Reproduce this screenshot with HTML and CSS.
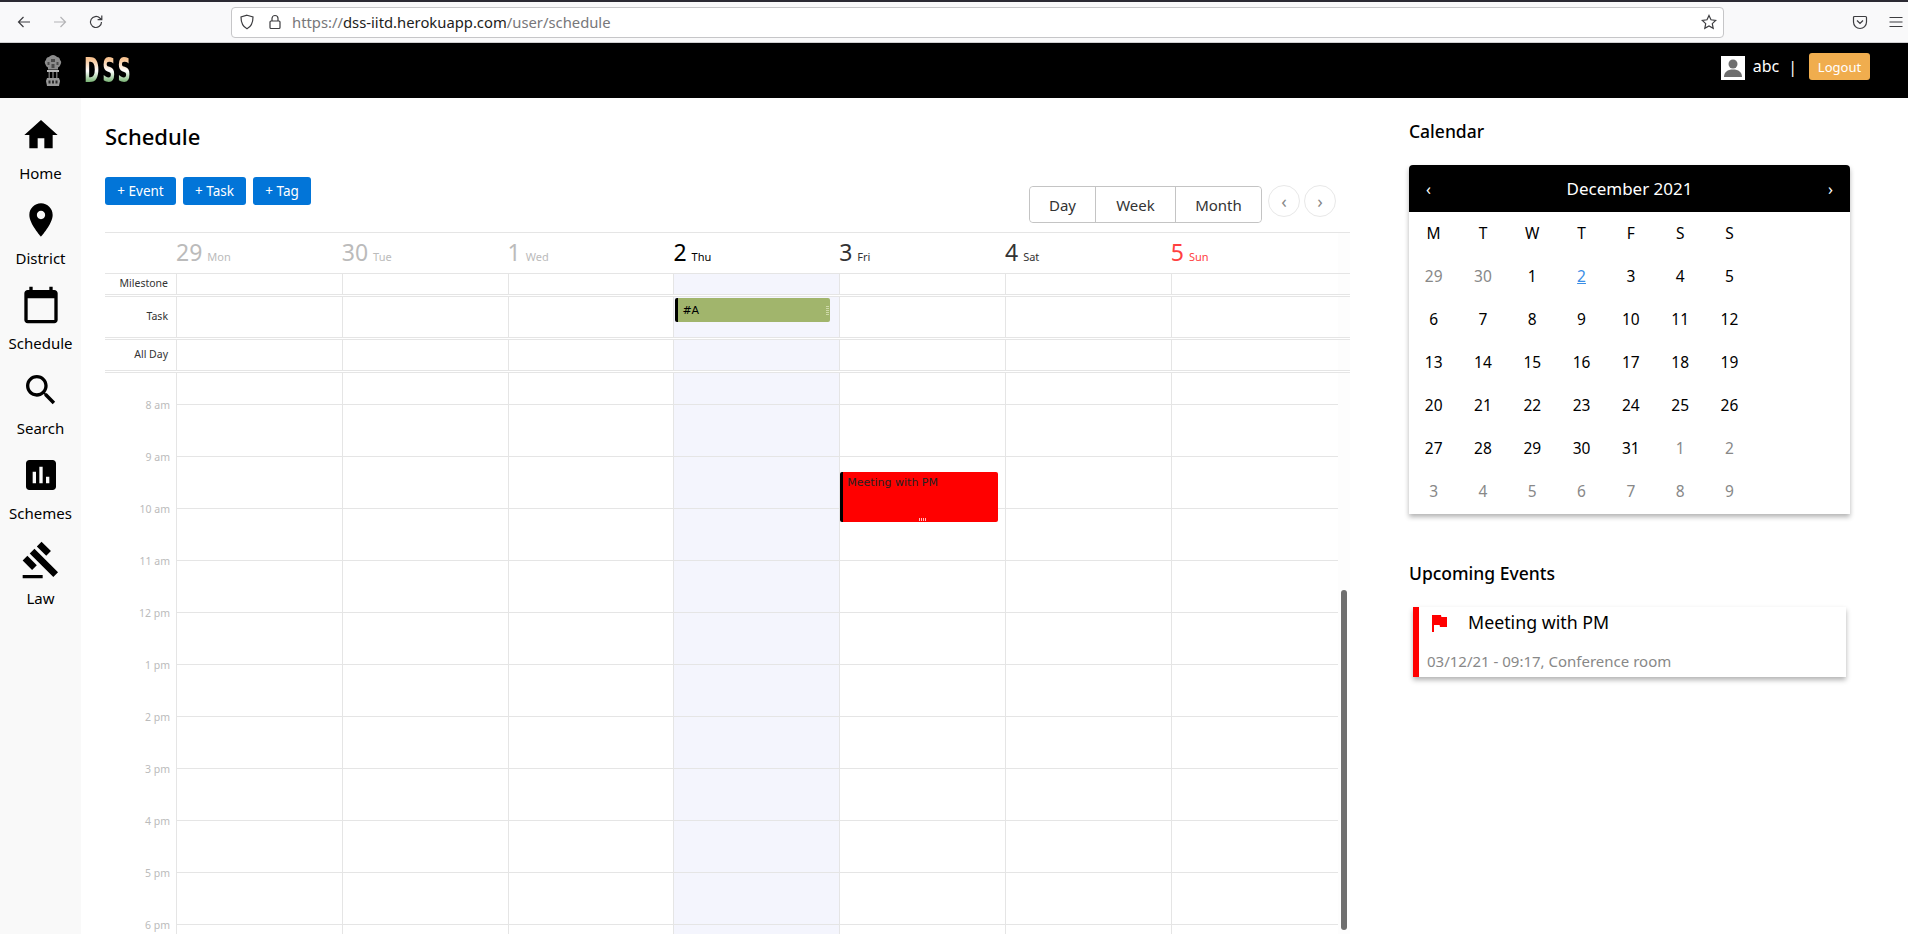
FILE: index.html
```html
<!DOCTYPE html>
<html lang="en">
<head>
    <meta charset="UTF-8">
    <meta name="viewport" content="width=device-width, initial-scale=1.0">
    <title>Schedule</title>
    <link rel="stylesheet" href="styles.css">
</head>
<body>
    <!-- browser toolbar -->
    <div class="browser">
        <svg class="tool" viewBox="0 0 16 16"><path d="M14 8H2.5M7.5 3 2.5 8l5 5"/></svg>
        <svg class="tool faded" viewBox="0 0 16 16"><path d="M2 8h11.5M8.5 3l5 5-5 5"/></svg>
        <svg class="tool" viewBox="0 0 16 16"><path d="M13.5 8A5.5 5.5 0 1 1 11.8 4L13.5 5.5M13.8 1.5v4.2H9.6"/></svg>
        <div class="urlbar">
            <svg class="tool" viewBox="0 0 16 16"><path d="M8 1.2 14 3c0 6-1.5 9.500-6 11.800C3.500 12.500 2 9 2 3z"/></svg>
            <svg class="tool" viewBox="0 0 16 16"><rect x="3" y="7" width="10" height="7.500" rx="1"/><path d="M5 7V4.500a3 3 0 0 1 6 0V7"/></svg>
            <span class="url">https://<b>dss-iitd.herokuapp.com</b>/user/schedule</span>
            <svg class="tool star" viewBox="0 0 16 16"><path d="m8 1.500 2 4.300 4.700.6-3.400 3.200.9 4.700L8 12l-4.200 2.300.9-4.700L1.300 6.400 6 5.800z"/></svg>
        </div>
        <svg class="tool pocket" viewBox="0 0 16 16"><path d="M2.500 2.500h11a1 1 0 0 1 1 1V8a6.500 6.500 0 0 1-13 0V3.500a1 1 0 0 1 1-1zM5 6.500l3 3 3-3"/></svg>
        <svg class="tool menu" viewBox="0 0 16 16"><path d="M1.500 3.500h13M1.500 8h13M1.500 12.500h13"/></svg>
    </div>

    <header class="topbar">
        <svg class="emblem" viewBox="0 0 20 31">
            <path fill="#8c8c8c" d="M10 0c2 0 3 1 4 2 2 0 3 1.500 3 3 1.500 1 1.500 3 .5 4.500-.5 1.500-1.500 2.500-2.500 3v2H5v-2c-1-.5-2-1.500-2.500-3C1.500 8 1.500 6 3 5c0-1.500 1-3 3-3 1-1 2-2 4-2z"/>
            <path fill="#4a4a4a" d="M8 4h4v3H8zM4.500 7h2v3h-2zM13.500 7h2v3h-2zM8.500 9h3v4h-3z"/>
            <rect x="4" y="15" width="12" height="2" fill="#b8b8b8"/>
            <path fill="#6a6a6a" d="M5.500 17H7v6H5.500zM9.200 17h1.600v6H9.200zM13 17h1.500v6H13z"/>
            <path fill="#999" d="M4 23h12l1 3-1 5H4l-1-5z"/>
            <path fill="#2c2c2c" d="M5.500 25.500h2v3h-2zM9 25.500h2v3H9zM12.500 25.500h2v3h-2z"/>
        </svg>
        <span class="brand">DSS</span>
        <div class="userbox">
            <svg class="avatar" viewBox="0 0 24 24"><rect width="24" height="24" fill="#fff"/><circle cx="12" cy="8" r="4.500" fill="#6e6e6e"/><path fill="#6e6e6e" d="M3 21c0-5 3.500-7.500 9-7.500s9 2.500 9 7.500z"/></svg>
            <span class="username">abc</span>
            <span class="sep">|</span>
            <button class="logout">Logout</button>
        </div>
    </header>

    <div class="main">
        <nav class="sidebar">
            <a class="nav-item"><svg viewBox="0 0 24 24"><path d="M10 20v-6h4v6h5v-8h3L12 3 2 12h3v8z"/></svg><span>Home</span></a>
            <a class="nav-item"><svg viewBox="0 0 24 24"><path d="M12 2C8.130 2 5 5.130 5 9c0 5.250 7 13 7 13s7-7.750 7-13c0-3.870-3.130-7-7-7zm0 9.500c-1.380 0-2.500-1.120-2.500-2.500s1.120-2.500 2.500-2.500 2.500 1.120 2.500 2.500-1.120 2.500-2.500 2.500z"/></svg><span>District</span></a>
            <a class="nav-item"><svg viewBox="0 0 24 24"><path d="M20 3h-1V1h-2v2H7V1H5v2H4c-1.100 0-2 .9-2 2v16c0 1.100.9 2 2 2h16c1.100 0 2-.9 2-2V5c0-1.100-.9-2-2-2zm0 18H4V8h16v13z"/></svg><span>Schedule</span></a>
            <a class="nav-item"><svg viewBox="0 0 24 24"><path d="M15.500 14h-.79l-.28-.27C15.410 12.590 16 11.110 16 9.500 16 5.910 13.090 3 9.500 3S3 5.910 3 9.500 5.910 16 9.500 16c1.610 0 3.090-.59 4.230-1.570l.27.28v.79l5 4.990L20.490 19l-4.990-5zm-6 0C7.010 14 5 11.990 5 9.500S7.010 5 9.500 5 14 7.010 14 9.500 11.990 14 9.500 14z"/></svg><span>Search</span></a>
            <a class="nav-item"><svg viewBox="0 0 24 24"><path d="M19 3H5c-1.100 0-2 .9-2 2v14c0 1.100.9 2 2 2h14c1.100 0 2-.9 2-2V5c0-1.100-.9-2-2-2zM9 17H7v-7h2v7zm4 0h-2V7h2v10zm4 0h-2v-4h2v4z"/></svg><span>Schemes</span></a>
            <a class="nav-item"><svg viewBox="0 0 24 24"><path d="M1 21h12v2H1zM5.245 8.070l2.830-2.827 14.140 14.142-2.828 2.828zM12.317 1l5.657 5.656-2.830 2.830-5.654-5.660zM3.825 9.485l5.657 5.657-2.828 2.828-5.657-5.657z"/></svg><span>Law</span></a>
        </nav>

        <section class="schedule">
            <h1 class="title">Schedule</h1>
            <div class="toolbar">
                <button class="btn-add add-event">+ Event</button>
                <button class="btn-add add-task">+ Task</button>
                <button class="btn-add add-tag">+ Tag</button>
                <div class="views">
                    <button class="view view-day">Day</button>
                    <button class="view view-week">Week</button>
                    <button class="view view-month">Month</button>
                </div>
                <button class="circle">‹</button>
                <button class="circle">›</button>
            </div>

            <div class="cal-grid day-row">
                <div></div>
                <div class="day past"><b>29</b><span>Mon</span></div>
                <div class="day past"><b>30</b><span>Tue</span></div>
                <div class="day past"><b>1</b><span>Wed</span></div>
                <div class="day today"><b>2</b><span>Thu</span></div>
                <div class="day"><b>3</b><span>Fri</span></div>
                <div class="day"><b>4</b><span>Sat</span></div>
                <div class="day sunday"><b>5</b><span>Sun</span></div>
                <div class="gutter"></div>
            </div>

            <div class="cal-grid panel milestone">
                <div class="panel-label">Milestone</div>
                <div class="cell"></div><div class="cell"></div><div class="cell"></div><div class="cell hl"></div><div class="cell"></div><div class="cell"></div><div class="cell"></div>
                <div class="gutter"></div>
            </div>
            <div class="cal-grid panel task">
                <div class="panel-label">Task</div>
                <div class="cell"></div><div class="cell"></div><div class="cell"></div>
                <div class="cell hl"><div class="task-item">#A<i class="grip-y"></i></div></div>
                <div class="cell"></div><div class="cell"></div><div class="cell"></div>
                <div class="gutter"></div>
            </div>
            <div class="cal-grid panel allday">
                <div class="panel-label">All Day</div>
                <div class="cell"></div><div class="cell"></div><div class="cell"></div><div class="cell hl"></div><div class="cell"></div><div class="cell"></div><div class="cell"></div>
                <div class="gutter"></div>
            </div>

            <div class="cal-grid hours">
                <div class="times">
                    <span>8 am</span><span>9 am</span><span>10 am</span><span>11 am</span><span>12 pm</span><span>1 pm</span><span>2 pm</span><span>3 pm</span><span>4 pm</span><span>5 pm</span><span>6 pm</span>
                </div>
                <div class="col"></div>
                <div class="col"></div>
                <div class="col"></div>
                <div class="col hl"></div>
                <div class="col">
                    <div class="event">Meeting with PM<i class="grip-x"></i></div>
                </div>
                <div class="col"></div>
                <div class="col"></div>
                <div class="gutter"><div class="thumb"></div></div>
            </div>
        </section>

        <aside class="side">
            <h2 class="side-title">Calendar</h2>
            <div class="minical">
                <div class="minical-head"><span>‹</span><strong>December 2021</strong><span>›</span></div>
                <div class="minical-body">
                    <span>M</span><span>T</span><span>W</span><span>T</span><span>F</span><span>S</span><span>S</span>
                    <span class="off">29</span><span class="off">30</span><span>1</span><a class="now">2</a><span>3</span><span>4</span><span>5</span>
                    <span>6</span><span>7</span><span>8</span><span>9</span><span>10</span><span>11</span><span>12</span>
                    <span>13</span><span>14</span><span>15</span><span>16</span><span>17</span><span>18</span><span>19</span>
                    <span>20</span><span>21</span><span>22</span><span>23</span><span>24</span><span>25</span><span>26</span>
                    <span>27</span><span>28</span><span>29</span><span>30</span><span>31</span><span class="off">1</span><span class="off">2</span>
                    <span class="off">3</span><span class="off">4</span><span class="off">5</span><span class="off">6</span><span class="off">7</span><span class="off">8</span><span class="off">9</span>
                </div>
            </div>

            <h2 class="side-title upcoming">Upcoming Events</h2>
            <div class="upcoming-card">
                <div class="upcoming-top">
                    <svg viewBox="0 0 24 24"><path d="M14.400 6 14 4H5v17h2v-7h5.600l.4 2h7V6z"/></svg>
                    <span>Meeting with PM</span>
                </div>
                <div class="upcoming-meta">03/12/21 - 09:17, Conference room</div>
            </div>
        </aside>
    </div>
</body>
</html>
```

FILE: styles.css
```css
* {
    box-sizing: border-box;
}
html, body {
    height: 934px;
    overflow: hidden;
}
body {
    margin: 0;
    font-family: "Noto Sans", Arial, sans-serif;
    color: #000;
    background: #fff;
    display: flex;
    flex-direction: column;
}
button {
    font-family: inherit;
    cursor: pointer;
}

/* browser toolbar */
.browser {
    height: 43px;
    flex: none;
    display: flex;
    align-items: center;
    background: #f9f9fa;
    border-top: 2px solid #2b2a33;
    border-bottom: 1px solid #cfcfd1;
    padding-left: 16px;
}
.tool {
    width: 16px;
    height: 16px;
    flex: none;
    fill: none;
    stroke: #3d3d40;
    stroke-width: 1.200;
    margin-right: 20px;
}
.tool.faded {
    stroke: #b4b4b6;
}
.urlbar {
    width: 1493px;
    height: 31px;
    margin-left: 107px;
    background: #fff;
    border: 1px solid #c6c6c8;
    border-radius: 4px;
    display: flex;
    align-items: center;
    padding-left: 7px;
}
.urlbar .tool {
    margin-right: 12px;
}
.url {
    font-size: 14.800px;
    color: #77777a;
    white-space: nowrap;
    margin-left: -3px;
}
.url b {
    font-weight: 400;
    color: #1d1d20;
}
.urlbar .star {
    margin-left: auto;
    margin-right: 6px;
}
.pocket {
    margin-left: 128px;
    margin-right: 20px;
}
.menu {
    margin-right: 0;
}

/* black site header */
.topbar {
    height: 55px;
    flex: none;
    background: #000;
    display: flex;
    align-items: center;
    padding-left: 43px;
    padding-right: 38px;
}
.emblem {
    width: 20px;
    height: 31px;
}
.brand {
    margin-left: 21px;
    font-family: "DejaVu Sans", sans-serif;
    font-weight: 700;
    font-size: 33px;
    line-height: 28px;
    letter-spacing: 5px;
    background: linear-gradient(180deg, #f8c493 8%, #ffffff 50%, #6fae6a 92%);
    -webkit-background-clip: text;
    background-clip: text;
    color: transparent;
    transform: scaleX(0.56);
    transform-origin: left center;
}
.userbox {
    margin-left: auto;
    margin-bottom: 8px;
    display: flex;
    align-items: center;
    color: #fff;
}
.avatar {
    width: 24px;
    height: 24px;
    margin-top: 2px;
}
.username {
    margin-left: 8px;
    font-size: 16px;
    margin-top: -2px;
}
.sep {
    margin-left: 9px;
    font-size: 16px;
}
.logout {
    margin-left: 12px;
    width: 61px;
    height: 27px;
    padding: 0;
    background: #f0ad4e;
    border: 0;
    border-radius: 3px;
    color: #fff;
    font-size: 13px;
}

/* page */
.main {
    flex: 1;
    display: flex;
    min-height: 0;
}
.sidebar {
    width: 81px;
    flex: none;
    background: #f9f9f9;
    padding-top: 17px;
    display: flex;
    flex-direction: column;
    gap: 15px;
}
.nav-item {
    height: 70px;
    display: flex;
    flex-direction: column;
    align-items: center;
    font-size: 15px;
}
.nav-item svg {
    width: 40px;
    height: 40px;
    flex: none;
}
.nav-item span {
    margin-top: 6px;
    line-height: 24px;
}

.schedule {
    width: 1245px;
    margin-left: 24px;
    flex: none;
    overflow: hidden;
}
.title {
    margin: 23px 0 0;
    font-size: 22px;
    font-weight: 500;
    line-height: 30px;
}
.toolbar {
    margin-top: 26px;
    height: 55px;
    display: flex;
    align-items: flex-start;
}
.btn-add {
    height: 28px;
    padding: 0;
    margin-right: 7px;
    background: #0275d8;
    color: #fff;
    border: 0;
    border-radius: 3px;
    font-size: 13.500px;
}
.add-event {
    width: 71px;
}
.add-task {
    width: 63px;
}
.add-tag {
    width: 58px;
}
.views {
    margin-left: auto;
    margin-top: 9px;
    display: flex;
    border: 1px solid #c4c4c4;
    border-radius: 4px;
    height: 37px;
}
.view {
    background: #fff;
    border: 0;
    border-left: 1px solid #c4c4c4;
    color: #333;
    font-size: 15px;
    padding: 0;
}
.view-day {
    width: 65px;
    border-left: 0;
    border-radius: 4px 0 0 4px;
}
.view-week {
    width: 80px;
}
.view-month {
    width: 86px;
    border-radius: 0 4px 4px 0;
}
.circle {
    width: 32px;
    height: 32px;
    margin-top: 8px;
    margin-left: 4px;
    padding: 0;
    background: #fff;
    border: 1px solid #e8e8e8;
    border-radius: 50%;
    color: #888;
    font-size: 18px;
    line-height: 26px;
}
.views + .circle {
    margin-left: 6px;
}
.circle:last-child {
    margin-right: 14px;
}

/* calendar grid */
.cal-grid {
    display: grid;
    grid-template-columns: 71px repeat(6, 165.800px) 167.200px 12px;
}
.day-row {
    height: 41px;
    border-top: 1px solid #e5e5e5;
}
.day {
    padding-top: 3px;
    color: #333;
    white-space: nowrap;
    line-height: 33px;
}
.day b {
    font-weight: 400;
    font-size: 23px;
}
.day span {
    font-size: 11px;
    margin-left: 5px;
}
.day.past {
    color: #bbb;
}
.day.today {
    color: #000;
}
.day.sunday {
    color: #ff4040;
}
.gutter {
    background: #fdfdfd;
}
.panel {
    border-top: 1px solid #e5e5e5;
    border-bottom: 1px solid #e5e5e5;
    margin-bottom: 1px;
}
.milestone {
    height: 22px;
}
.task {
    height: 42px;
}
.allday {
    height: 32px;
}
.panel-label {
    font-size: 10.500px;
    color: #333;
    text-align: right;
    padding-right: 8px;
    line-height: 18px;
}
.task .panel-label {
    line-height: 38px;
}
.allday .panel-label {
    line-height: 28px;
}
.cell {
    border-left: 1px solid #e5e5e5;
}
.hl {
    background-color: #f4f5fd;
}
.task-item {
    margin: 1px 9px 0 1px;
    height: 24px;
    background: #a1b56c;
    border-left: 3px solid #000;
    border-radius: 2px;
    padding-left: 4px;
    display: flex;
    align-items: center;
    justify-content: space-between;
    font-family: "DejaVu Sans", sans-serif;
    font-size: 11px;
    color: #000;
}
.grip-y {
    width: 3px;
    height: 9px;
    margin-right: 1px;
    background: repeating-linear-gradient(180deg, #cfd9a9 0 1px, transparent 1px 2px);
}
.hours {
    height: 562px;
    border-top: 1px solid #e5e5e5;
}
.times {
    display: flex;
    flex-direction: column;
    padding-top: 25px;
    padding-right: 6px;
    text-align: right;
    font-size: 10.500px;
    color: #bbb;
}
.times span {
    height: 52px;
    flex: none;
    line-height: 15px;
}
.col {
    border-left: 1px solid #e5e5e5;
    background-image: repeating-linear-gradient(180deg, transparent 0 51px, #e5e5e5 51px 52px);
    background-position: 0 -20px;
    background-size: 100% 52px;
}
.event {
    margin-top: 99px;
    width: 158px;
    height: 50px;
    background: #f00;
    border-left: 3px solid #000;
    border-radius: 2px;
    padding: 3px 0 0 4px;
    font-family: "DejaVu Sans", sans-serif;
    font-size: 11px;
    line-height: 15px;
    color: #222;
    display: flex;
    flex-direction: column;
    align-items: stretch;
}
.grip-x {
    width: 8px;
    height: 3px;
    margin: auto auto 1px;
    background: repeating-linear-gradient(90deg, #ffc0c0 0 1px, transparent 1px 2px);
}
.thumb {
    width: 6px;
    height: 340px;
    margin: 217px 0 0 3px;
    background: #6e6e6e;
    border-radius: 3px;
}

/* right column */
.side {
    width: 441px;
    margin-left: 59px;
    flex: none;
}
.side-title {
    margin: 20px 0 0;
    font-size: 17.500px;
    font-weight: 500;
    line-height: 26px;
}
.minical {
    margin-top: 21px;
    height: 349px;
    border-radius: 4px 4px 0 0;
    box-shadow: 0 3px 5px rgba(0, 0, 0, 0.3);
}
.minical-head {
    height: 47px;
    background: #000;
    color: #fff;
    border-radius: 4px 4px 0 0;
    display: flex;
    align-items: center;
    justify-content: space-between;
    padding: 0 17px;
    font-size: 16px;
}
.minical-head strong {
    font-weight: 400;
    font-size: 17px;
}
.minical-body {
    display: grid;
    grid-template-columns: repeat(7, 49.300px);
    grid-auto-rows: 43px;
    font-size: 15.500px;
    text-align: center;
    line-height: 43px;
}
.off {
    color: #888;
}
.now {
    color: #3a8ee6;
    text-decoration: underline;
}
.upcoming {
    margin-top: 46px;
}
.upcoming-card {
    margin: 21px 0 0 4px;
    width: 433px;
    height: 70px;
    border-left: 6px solid #f00;
    box-shadow: 0 3px 5px rgba(0, 0, 0, 0.3);
    padding-left: 8px;
}
.upcoming-top {
    display: flex;
    align-items: center;
    height: 30px;
    font-size: 17.800px;
}
.upcoming-top svg {
    width: 24px;
    height: 24px;
    fill: #f00;
    margin-top: 2px;
    margin-right: 17px;
}
.upcoming-meta {
    margin-top: 12px;
    font-size: 15px;
    line-height: 24px;
    color: #888;
}
```
